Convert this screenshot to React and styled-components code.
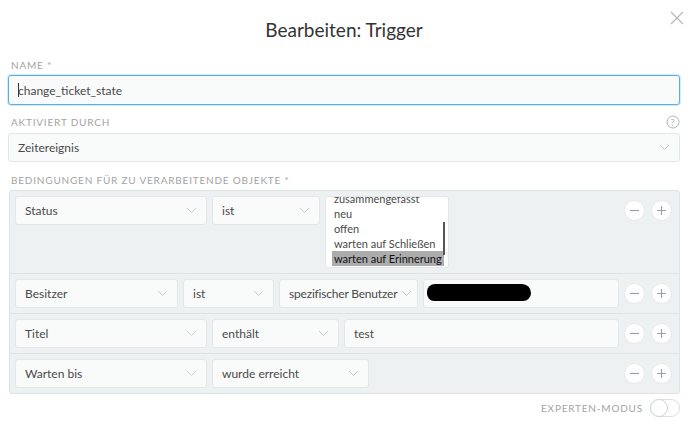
import React from 'react'
import styled, { createGlobalStyle } from 'styled-components'

const Global = createGlobalStyle`
    body{
        margin:0;
        background:#fff;
        font-family:"Lato","Open Sans",sans-serif;
        color:#555;
    }
`;

const Modal = styled.div`
    width:690px;
    height:427px;
    box-sizing:border-box;
    padding:0 10px 0 8px;
    position:relative;
    overflow:hidden;
`;

const Title = styled.h1`
    margin:0;
    padding-top:18px;
    height:40px;
    box-sizing:border-box;
    text-align:center;
    font-weight:400;
    font-size:19px;
    color:#333;
    line-height:24px;
`;

const Close = styled.button`
    position:absolute;
    top:11px;
    right:6px;
    width:14px;
    height:14px;
    padding:0;
    border:none;
    background:none;
`;

const Label = styled.div`
    display:flex;
    justify-content:space-between;
    align-items:center;
    font-size:10px;
    letter-spacing:0.8px;
    text-transform:uppercase;
    color:#a3a3a3;
    height:14px;
    white-space:nowrap;
    margin:${p => p.top || 0}px 0 ${p => p.bottom || 3}px 3px;
`;

const Field = styled.div`
    height:${p => p.h || 29}px;
    box-sizing:border-box;
    border:1px solid ${p => p.focus ? '#5aaee8' : '#e4e7e8'};
    box-shadow:${p => p.focus ? '0 0 0 1px #d6eaf8' : 'none'};
    border-radius:3px;
    background:#f9fafa;
    display:flex;
    align-items:center;
    gap:4px;
    padding:0 9px;
    font-size:12px;
    white-space:nowrap;
    color:#4a4a4a;
    width:${p => p.w ? p.w + 'px' : 'auto'};
    flex:${p => p.w ? 'none' : 1};
    position:relative;
`;

const Caret = styled.span`
    display:inline-block;
    width:1px;
    height:14px;
    background:#333;
    margin-right:-5px;
`;

const Chevron = () => (
    <svg width="11" height="7" viewBox="0 0 11 7" style={{ marginLeft: 'auto', flex: 'none' }}>
        <path d="M1 1l4.5 4.5L10 1" fill="none" stroke="#c9cdd0" strokeWidth="1" />
    </svg>
);

const Select = ({ w, children, tight }) => (
    <Field w={w}>
        <span style={tight ? { letterSpacing: '-0.2px' } : undefined}>{children}</span>
        <Chevron />
    </Field>
);

const Panel = styled.div`
    margin-left:1px;
    border:1px solid #dde3e6;
    border-radius:3px;
    background:#eef1f2;
`;

const Row = styled.div`
    display:flex;
    align-items:flex-start;
    gap:5px;
    padding:5px 7px 5px 5px;
    border-top:${p => p.first ? 'none' : '1px solid #dde3e6'};
`;

const Controls = styled.div`
    margin-left:auto;
    display:flex;
    gap:6px;
    padding-top:4px;
`;

const Round = styled.button`
    width:21px;
    height:21px;
    border-radius:50%;
    border:1px solid #e6e9ea;
    background:#fff;
    padding:0;
    display:flex;
    align-items:center;
    justify-content:center;
`;

const ListBox = styled.div`
    width:124px;
    height:72px;
    box-sizing:border-box;
    border:1px solid #e4e7e8;
    border-radius:3px;
    background:#fff;
    overflow:hidden;
    position:relative;
    padding:0 8px;
    font-size:11px;
    line-height:15px;
    white-space:nowrap;
    color:#4a4a4a;
`;

const Items = styled.div`
    margin-top:-6px;
`;

const Item = styled.div`
    padding:0 2px;
    margin:0 -2px;
    width:fit-content;
    background:${p => p.sel ? '#acacac' : 'none'};
    color:${p => p.sel ? '#111' : '#4a4a4a'};
`;

const Thumb = styled.div`
    position:absolute;
    right:3px;
    top:25px;
    width:2px;
    height:33px;
    background:#555;
`;

const Redacted = styled.div`
    position:absolute;
    left:3px;
    top:4px;
    width:104px;
    height:17px;
    background:#000;
    border-radius:9px 10px 9px 8px;
`;

const Footer = styled.div`
    display:flex;
    justify-content:flex-end;
    align-items:center;
    gap:7px;
    margin-top:5px;
`;

const FooterLabel = styled.span`
    font-size:10px;
    letter-spacing:0.8px;
    color:#a3a3a3;
`;

const Toggle = styled.div`
    width:30px;
    height:18px;
    box-sizing:border-box;
    border:1px solid #dcdfe0;
    border-radius:9px;
    background:#fff;
    position:relative;
    &::after{
        content:'';
        position:absolute;
        left:-1px;
        top:-1px;
        width:16px;
        height:16px;
        border-radius:50%;
        border:1px solid #cfd3d5;
        background:#fff;
    }
`;

const Minus = () => (
    <svg width="9" height="9" viewBox="0 0 9 9"><path d="M0 4.5h9" stroke="#9aa0a3" strokeWidth="1.2" /></svg>
);
const Plus = () => (
    <svg width="9" height="9" viewBox="0 0 9 9"><path d="M0 4.5h9M4.5 0v9" stroke="#9aa0a3" strokeWidth="1.2" /></svg>
);

const Buttons = () => (
    <Controls>
        <Round><Minus /></Round>
        <Round><Plus /></Round>
    </Controls>
);

export default function App() {
    return (
        <Modal>
            <Global />
            <Close>
                <svg width="14" height="14" viewBox="0 0 14 14">
                    <path d="M1 1l12 12M13 1L1 13" stroke="#b5b9bb" strokeWidth="1.2" />
                </svg>
            </Close>
            <Title>Bearbeiten: Trigger</Title>
            <Label top={18} bottom={3}>Name *</Label>
            <Field h={30} focus><Caret />change_ticket_state</Field>
            <Label top={10} bottom={4}>
                <span>Aktiviert durch</span>
                <svg width="14" height="14" viewBox="0 0 14 14">
                    <circle cx="7" cy="7" r="6" fill="none" stroke="#b0b4b6" />
                    <text x="7" y="10.5" textAnchor="middle" fontSize="9" fill="#b0b4b6" fontFamily="Lato, sans-serif">?</text>
                </svg>
            </Label>
            <Select>Zeitereignis</Select>
            <Label top={11} bottom={3}>Bedingungen für zu verarbeitende Objekte *</Label>
            <Panel>
                <Row first>
                    <Select w={192}>Status</Select>
                    <Select w={108}>ist</Select>
                    <ListBox>
                        <Items>
                            <Item>zusammengefasst</Item>
                            <Item>neu</Item>
                            <Item>offen</Item>
                            <Item>warten auf Schließen</Item>
                            <Item sel>warten auf Erinnerung</Item>
                        </Items>
                        <Thumb />
                    </ListBox>
                    <Buttons />
                </Row>
                <Row>
                    <Select w={163}>Besitzer</Select>
                    <Select w={91}>ist</Select>
                    <Select w={139} tight>spezifischer Benutzer</Select>
                    <Field><Redacted /></Field>
                    <Buttons />
                </Row>
                <Row>
                    <Select w={192}>Titel</Select>
                    <Select w={127}>enthält</Select>
                    <Field>test</Field>
                    <Buttons />
                </Row>
                <Row>
                    <Select w={192}>Warten bis</Select>
                    <Select w={157}>wurde erreicht</Select>
                    <Buttons />
                </Row>
            </Panel>
            <Footer>
                <FooterLabel>EXPERTEN-MODUS</FooterLabel>
                <Toggle />
            </Footer>
        </Modal>
    )
}
